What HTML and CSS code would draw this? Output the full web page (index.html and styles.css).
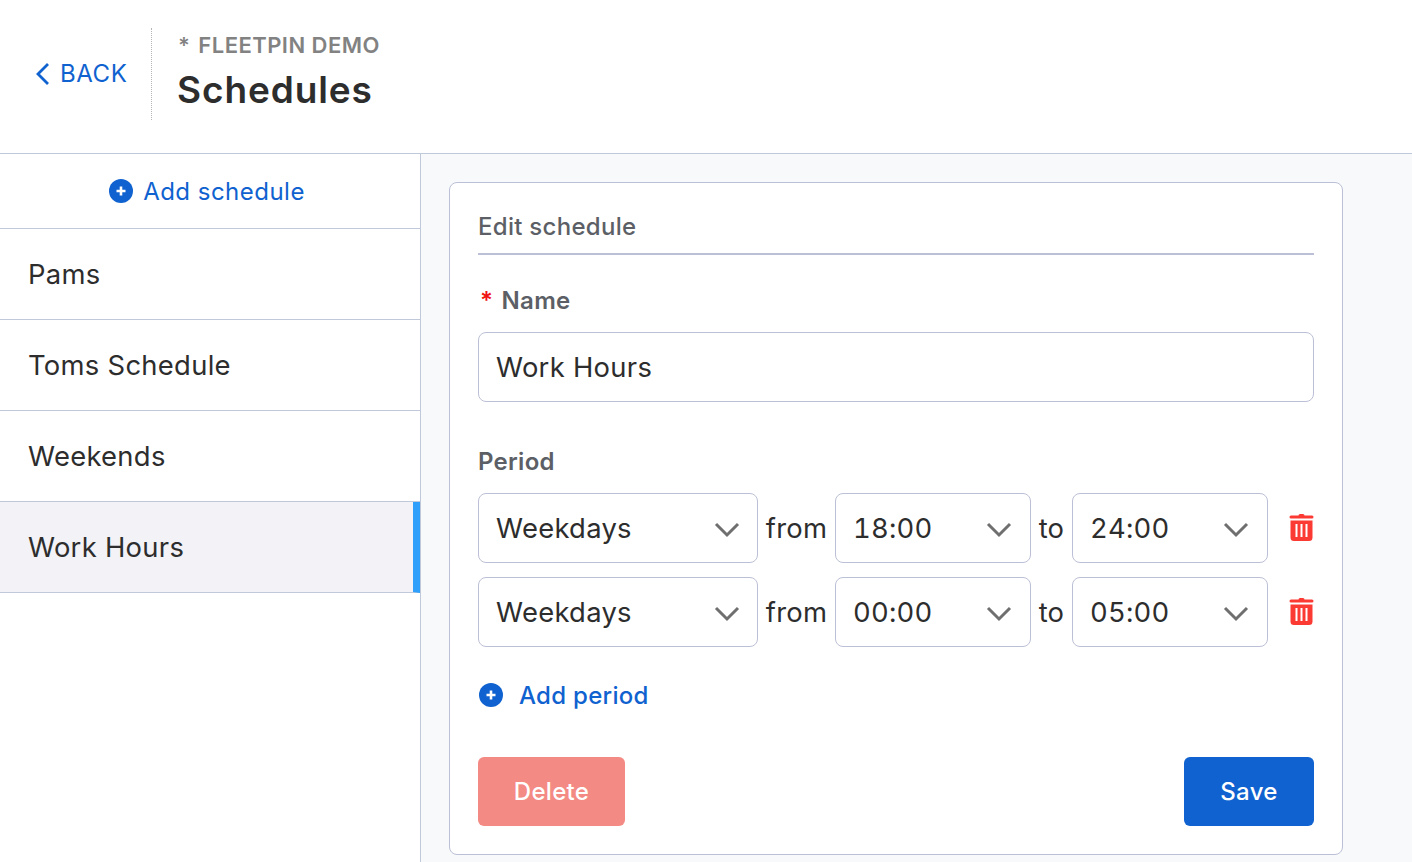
FILE: index.html
```html
<!DOCTYPE html>
<html lang="en">
<head>
    <meta charset="UTF-8">
    <title>Schedules</title>
    <link rel="stylesheet" href="styles.css">
</head>
<body>

    <header class="page-header">
        <a class="back-link" href="#">
            <svg width="16" height="24" viewBox="0 0 16 24"><path d="M14 2 L4 12 L14 22" fill="none" stroke="#0f62cf" stroke-width="2.8"/></svg>
            <span>BACK</span>
        </a>
        <div class="header-titles">
            <div class="org-name"><span class="org-star">*</span> FLEETPIN DEMO</div>
            <h1 class="page-title">Schedules</h1>
        </div>
    </header>

    <div class="page-body">
        <aside class="sidebar">
            <a class="add-schedule" href="#">
                <svg class="plus-icon" width="24" height="24" viewBox="0 0 24 24"><circle cx="12" cy="12" r="12" fill="#0f62cf"/><path d="M12 7.500v9M7.500 12h9" stroke="#fff" stroke-width="2.600"/></svg>
                <span>Add schedule</span>
            </a>
            <div class="schedule-row">Pams</div>
            <div class="schedule-row">Toms Schedule</div>
            <div class="schedule-row">Weekends</div>
            <div class="schedule-row selected">Work Hours</div>
        </aside>

        <main class="content">
            <section class="card">
                <h2 class="card-title">Edit schedule</h2>

                <label class="field-label name-label"><span class="required">*</span> Name</label>
                <input class="text-input" type="text" value="Work Hours">

                <div class="field-label period-label">Period</div>

                <div class="period-row">
                    <div class="select day-select"><span>Weekdays</span><svg class="chevron" width="26" height="18" viewBox="0 0 26 18"><path d="M2 3 L13 14 L24 3" fill="none" stroke="#6f6f6f" stroke-width="3"/></svg></div>
                    <span class="joiner from">from</span>
                    <div class="select time-select"><span>18:00</span><svg class="chevron" width="26" height="18" viewBox="0 0 26 18"><path d="M2 3 L13 14 L24 3" fill="none" stroke="#6f6f6f" stroke-width="3"/></svg></div>
                    <span class="joiner to">to</span>
                    <div class="select time-select"><span>24:00</span><svg class="chevron" width="26" height="18" viewBox="0 0 26 18"><path d="M2 3 L13 14 L24 3" fill="none" stroke="#6f6f6f" stroke-width="3"/></svg></div>
                    <svg class="trash" width="25" height="28" viewBox="0 0 24 28"><path d="M9 2.500 Q9 1 10.500 1 H13.500 Q15 1 15 2.500 H22.500 Q24 2.500 24 4 Q24 5.500 22.500 5.500 H1.500 Q0 5.500 0 4 Q0 2.500 1.500 2.500 Z" fill="#fb3a33"/><path fill-rule="evenodd" d="M1 7.500 H23 V24.500 Q23 28 19.500 28 H4.500 Q1 28 1 24.500 Z M6 11 V24 H8 V11 Z M11 11 V24 H13 V11 Z M16 11 V24 H18 V11 Z" fill="#fb3a33"/></svg>
                </div>

                <div class="period-row">
                    <div class="select day-select"><span>Weekdays</span><svg class="chevron" width="26" height="18" viewBox="0 0 26 18"><path d="M2 3 L13 14 L24 3" fill="none" stroke="#6f6f6f" stroke-width="3"/></svg></div>
                    <span class="joiner from">from</span>
                    <div class="select time-select"><span>00:00</span><svg class="chevron" width="26" height="18" viewBox="0 0 26 18"><path d="M2 3 L13 14 L24 3" fill="none" stroke="#6f6f6f" stroke-width="3"/></svg></div>
                    <span class="joiner to">to</span>
                    <div class="select time-select"><span>05:00</span><svg class="chevron" width="26" height="18" viewBox="0 0 26 18"><path d="M2 3 L13 14 L24 3" fill="none" stroke="#6f6f6f" stroke-width="3"/></svg></div>
                    <svg class="trash" width="25" height="28" viewBox="0 0 24 28"><path d="M9 2.500 Q9 1 10.500 1 H13.500 Q15 1 15 2.500 H22.500 Q24 2.500 24 4 Q24 5.500 22.500 5.500 H1.500 Q0 5.500 0 4 Q0 2.500 1.500 2.500 Z" fill="#fb3a33"/><path fill-rule="evenodd" d="M1 7.500 H23 V24.500 Q23 28 19.500 28 H4.500 Q1 28 1 24.500 Z M6 11 V24 H8 V11 Z M11 11 V24 H13 V11 Z M16 11 V24 H18 V11 Z" fill="#fb3a33"/></svg>
                </div>

                <a class="add-period" href="#">
                    <svg class="plus-icon" width="24" height="24" viewBox="0 0 24 24"><circle cx="12" cy="12" r="12" fill="#0f62cf"/><path d="M12 7.500v9M7.500 12h9" stroke="#fff" stroke-width="2.600"/></svg>
                    <span>Add period</span>
                </a>

                <div class="card-actions">
                    <button class="btn btn-delete">Delete</button>
                    <button class="btn btn-save">Save</button>
                </div>
            </section>
        </main>
    </div>

</body>
</html>
```

FILE: styles.css
```css
/* Page setup */
:root {
    --blue: #0f62cf;
    --line: #bfc9da;
    --field-line: #bcc0d6;
    --text: #2d2d2d;
    --muted: #5c5f66;
}

html, body {
    margin: 0;
    padding: 0;
    width: 100%;
    height: 100%;
    overflow: hidden;
    background: #fff;
    color: var(--text);
    font-family: Inter, "Liberation Sans", sans-serif;
    letter-spacing: 0.018em;
}

a {
    color: var(--blue);
    text-decoration: none;
}

/* Header */
.page-header {
    display: flex;
    align-items: center;
    height: 154px;
    padding: 28px 0 33px 34px;
    box-sizing: border-box;
    border-bottom: 1px solid var(--line);
}

.back-link {
    display: flex;
    align-items: center;
    gap: 10px;
    height: 92px;
    width: 117px;
    font-size: 24px;
    letter-spacing: 0.024em;
    border-right: 1px dotted #b5b5b5;
}

.back-link span {
    padding-bottom: 2px;
}

.header-titles {
    padding-left: 26px;
}

.org-name {
    margin-top: -4px;
    font-size: 22px;
    font-weight: 600;
    color: #828282;
    line-height: 30px;
    letter-spacing: 0.021em;
}

.org-star {
    margin-right: 2px;
}

.page-title {
    margin: 6px 0 0 -1px;
    font-size: 37px;
    font-weight: 600;
    line-height: 48px;
    letter-spacing: 0.024em;
    color: var(--text);
}

/* Body layout */
.page-body {
    display: flex;
    height: 708px;
}

.sidebar {
    width: 421px;
    flex: none;
    box-sizing: border-box;
    border-right: 1px solid var(--line);
}

.add-schedule {
    display: flex;
    align-items: center;
    justify-content: center;
    gap: 10px;
    height: 75px;
    box-sizing: border-box;
    padding-right: 6px;
    border-bottom: 1px solid var(--line);
    font-size: 24px;
    letter-spacing: 0.02em;
}

.schedule-row {
    display: flex;
    align-items: center;
    height: 91px;
    box-sizing: border-box;
    padding-left: 28px;
    border-bottom: 1px solid var(--line);
    font-size: 27.4px;
}

.schedule-row.selected {
    background: #f2f2f7;
    border-right: 7px solid #2e9ffb;
}

.content {
    flex: 1;
    background: #f8f9fb;
    padding: 28px 0 0 28px;
}

/* Edit card */
.card {
    width: 894px;
    height: 673px;
    box-sizing: border-box;
    padding: 28px;
    background: #fff;
    border: 1px solid var(--field-line);
    border-radius: 8px;
}

.card-title {
    margin: 0;
    height: 42px;
    line-height: 32px;
    font-size: 24px;
    font-weight: 500;
    color: var(--muted);
    border-bottom: 2px solid var(--field-line);
}

.field-label {
    font-size: 24px;
    font-weight: 600;
    color: var(--muted);
    line-height: 32px;
}

.name-label {
    display: block;
    margin-top: 30px;
}

.required {
    color: #f01414;
    margin: 0 2px 0 2px;
}

.text-input {
    display: block;
    width: 100%;
    height: 70px;
    margin-top: 15px;
    padding: 0 17px;
    box-sizing: border-box;
    border: 1px solid var(--field-line);
    border-radius: 8px;
    background: #fff;
    color: var(--text);
    font-family: inherit;
    font-size: 27.4px;
    letter-spacing: inherit;
}

.period-label {
    margin-top: 44px;
}

.period-row {
    display: flex;
    align-items: center;
    height: 70px;
    margin-top: 14px;
}

.period-label + .period-row {
    margin-top: 15px;
}

.select {
    display: flex;
    align-items: center;
    justify-content: space-between;
    height: 70px;
    padding: 0 18px 0 17px;
    box-sizing: border-box;
    border: 1px solid var(--field-line);
    border-radius: 8px;
    font-size: 27.4px;
}

.day-select {
    width: 280px;
    padding-right: 17px;
}

.time-select {
    width: 196px;
    letter-spacing: 0.008em;
    font-variant-numeric: tabular-nums;
}

.chevron {
    margin-top: 4px;
}

.joiner {
    font-size: 27.4px;
    text-align: center;
}

.joiner.from {
    width: 77px;
}

.joiner.to {
    width: 41px;
}

.trash {
    margin: -2px 0 0 21px;
}

.add-period {
    display: flex;
    align-items: center;
    gap: 16px;
    height: 32px;
    margin-top: 32px;
    margin-left: 1px;
    font-size: 24px;
    font-weight: 500;
}

/* Buttons */
.card-actions {
    display: flex;
    justify-content: space-between;
    margin-top: 46px;
}

.btn {
    height: 69px;
    border: none;
    border-radius: 6px;
    color: #fff;
    font-family: inherit;
    font-size: 24px;
    font-weight: 500;
    letter-spacing: inherit;
}

.btn-delete {
    width: 147px;
    background: #f48a84;
}

.btn-save {
    width: 130px;
    background: var(--blue);
}
```
